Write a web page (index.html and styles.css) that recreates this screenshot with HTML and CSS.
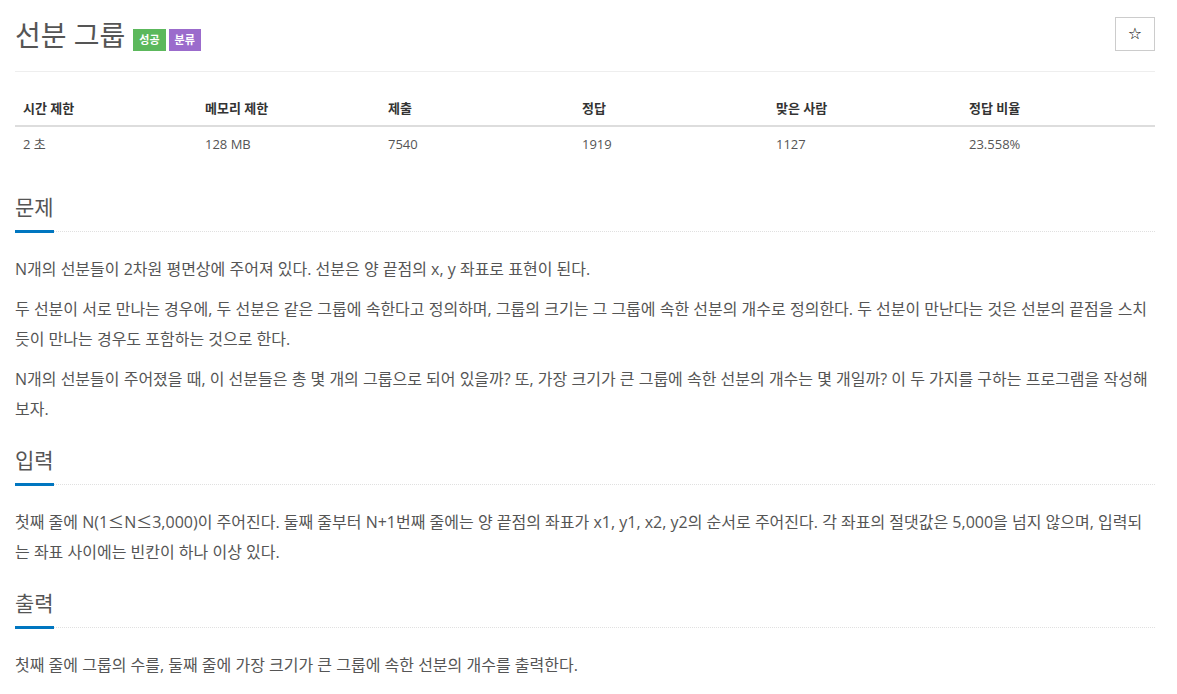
FILE: index.html
```html
<!DOCTYPE html>
<html lang="ko">
<head>
<meta charset="utf-8">
<title>선분 그룹</title>
<link rel="stylesheet" href="styles.css">
</head>
<body>
<div class="container">
  <div class="page-header">
    <div class="title-wrap">
      <h1 class="title">선분 그룹</h1>
      <span class="label label-success">성공</span>
      <span class="label label-tag">분류</span>
    </div>
    <button class="star-btn" type="button">☆</button>
  </div>

  <table class="info-table">
    <colgroup>
      <col class="c1"><col class="c2"><col class="c3"><col class="c4"><col class="c5"><col class="c6">
    </colgroup>
    <thead>
      <tr><th>시간 제한</th><th>메모리 제한</th><th>제출</th><th>정답</th><th>맞은 사람</th><th>정답 비율</th></tr>
    </thead>
    <tbody>
      <tr><td>2 초</td><td>128 MB</td><td>7540</td><td>1919</td><td>1127</td><td>23.558%</td></tr>
    </tbody>
  </table>

  <section class="section">
    <div class="headline"><h2>문제</h2></div>
    <p>N개의 선분들이 2차원 평면상에 주어져 있다. 선분은 양 끝점의 x, y 좌표로 표현이 된다.</p>
    <p>두 선분이 서로 만나는 경우에, 두 선분은 같은 그룹에 속한다고 정의하며, 그룹의 크기는 그 그룹에 속한 선분의 개수로 정의한다. 두 선분이 만난다는 것은 선분의 끝점을 스치듯이 만나는 경우도 포함하는 것으로 한다.</p>
    <p>N개의 선분들이 주어졌을 때, 이 선분들은 총 몇 개의 그룹으로 되어 있을까? 또, 가장 크기가 큰 그룹에 속한 선분의 개수는 몇 개일까? 이 두 가지를 구하는 프로그램을 작성해 보자.</p>
  </section>

  <section class="section">
    <div class="headline"><h2>입력</h2></div>
    <p>첫째 줄에 N(1<span class="sym">≤</span>N<span class="sym">≤</span>3,000)이 주어진다. 둘째 줄부터 N+1번째 줄에는 양 끝점의 좌표가 x1, y1, x2, y2의 순서로 주어진다. 각 좌표의 절댓값은 5,000을 넘지 않으며, 입력되는 좌표 사이에는 빈칸이 하나 이상 있다.</p>
  </section>

  <section class="section">
    <div class="headline"><h2>출력</h2></div>
    <p>첫째 줄에 그룹의 수를, 둘째 줄에 가장 크기가 큰 그룹에 속한 선분의 개수를 출력한다.</p>
  </section>
</div>
</body>
</html>
```

FILE: styles.css
```css
html, body {
  margin: 0;
  padding: 0;
  background: #fff;
}
body {
  font-family: "Open Sans", "Noto Sans CJK KR", sans-serif;
  color: #555;
  font-size: 14px;
}
.container {
  padding: 0 22px 0 15px;
}
.page-header {
  display: flex;
  justify-content: space-between;
  align-items: flex-start;
  padding-top: 17px;
  padding-bottom: 19px;
  border-bottom: 1px solid #eee;
}
.title-wrap {
  display: flex;
  align-items: flex-start;
  padding-top: 2px;
}
.title {
  margin: 0;
  font-size: 28px;
  line-height: 33px;
  font-weight: 400;
  color: #555;
}
.label {
  display: inline-block;
  margin-top: 10px;
  padding: 5px 6px;
  font-size: 11px;
  line-height: 12px;
  font-weight: 700;
  color: #fff;
}
.label-success {
  background: #5cb85c;
  margin-left: 8px;
}
.label-tag {
  background: #9b6bcc;
  margin-left: 3px;
}
.star-btn {
  width: 40px;
  height: 34px;
  padding: 0;
  background: #fff;
  border: 1px solid #ccc;
  font-size: 16px;
  line-height: 1;
  color: #000;
  font-family: "DejaVu Sans", sans-serif;
}
.info-table {
  width: 100%;
  border-collapse: collapse;
  margin-top: 19px;
  margin-bottom: 20px;
  font-size: 13px;
}
.info-table .c1 { width: 182px; }
.info-table .c2 { width: 183px; }
.info-table .c3 { width: 194px; }
.info-table .c4 { width: 194px; }
.info-table .c5 { width: 193px; }
.info-table .c6 { width: 194px; }
.info-table th,
.info-table td {
  text-align: left;
  padding: 8px;
  line-height: 18px;
  color: #333;
}
.info-table th {
  font-weight: 700;
  border-bottom: 2px solid #ddd;
}
.info-table td {
  color: #555;
}
.section {
  padding-top: 13px;
}
.headline {
  border-bottom: 1px dotted #e0e0e0;
  margin-bottom: 22px;
}
.headline h2 {
  display: inline-block;
  margin: 0 0 -2px 0;
  padding: 0 0 10px 0;
  font-size: 21px;
  line-height: 26px;
  font-weight: 400;
  color: #555;
  border-bottom: 3px solid #0076c0;
}
.section p {
  margin: 0 0 10px 0;
  font-size: 16px;
  line-height: 30px;
  color: #555;
}
.sym {
  display: inline-block;
  font-family: "Noto Sans CJK KR", sans-serif;
  line-height: 16px;
}
```
